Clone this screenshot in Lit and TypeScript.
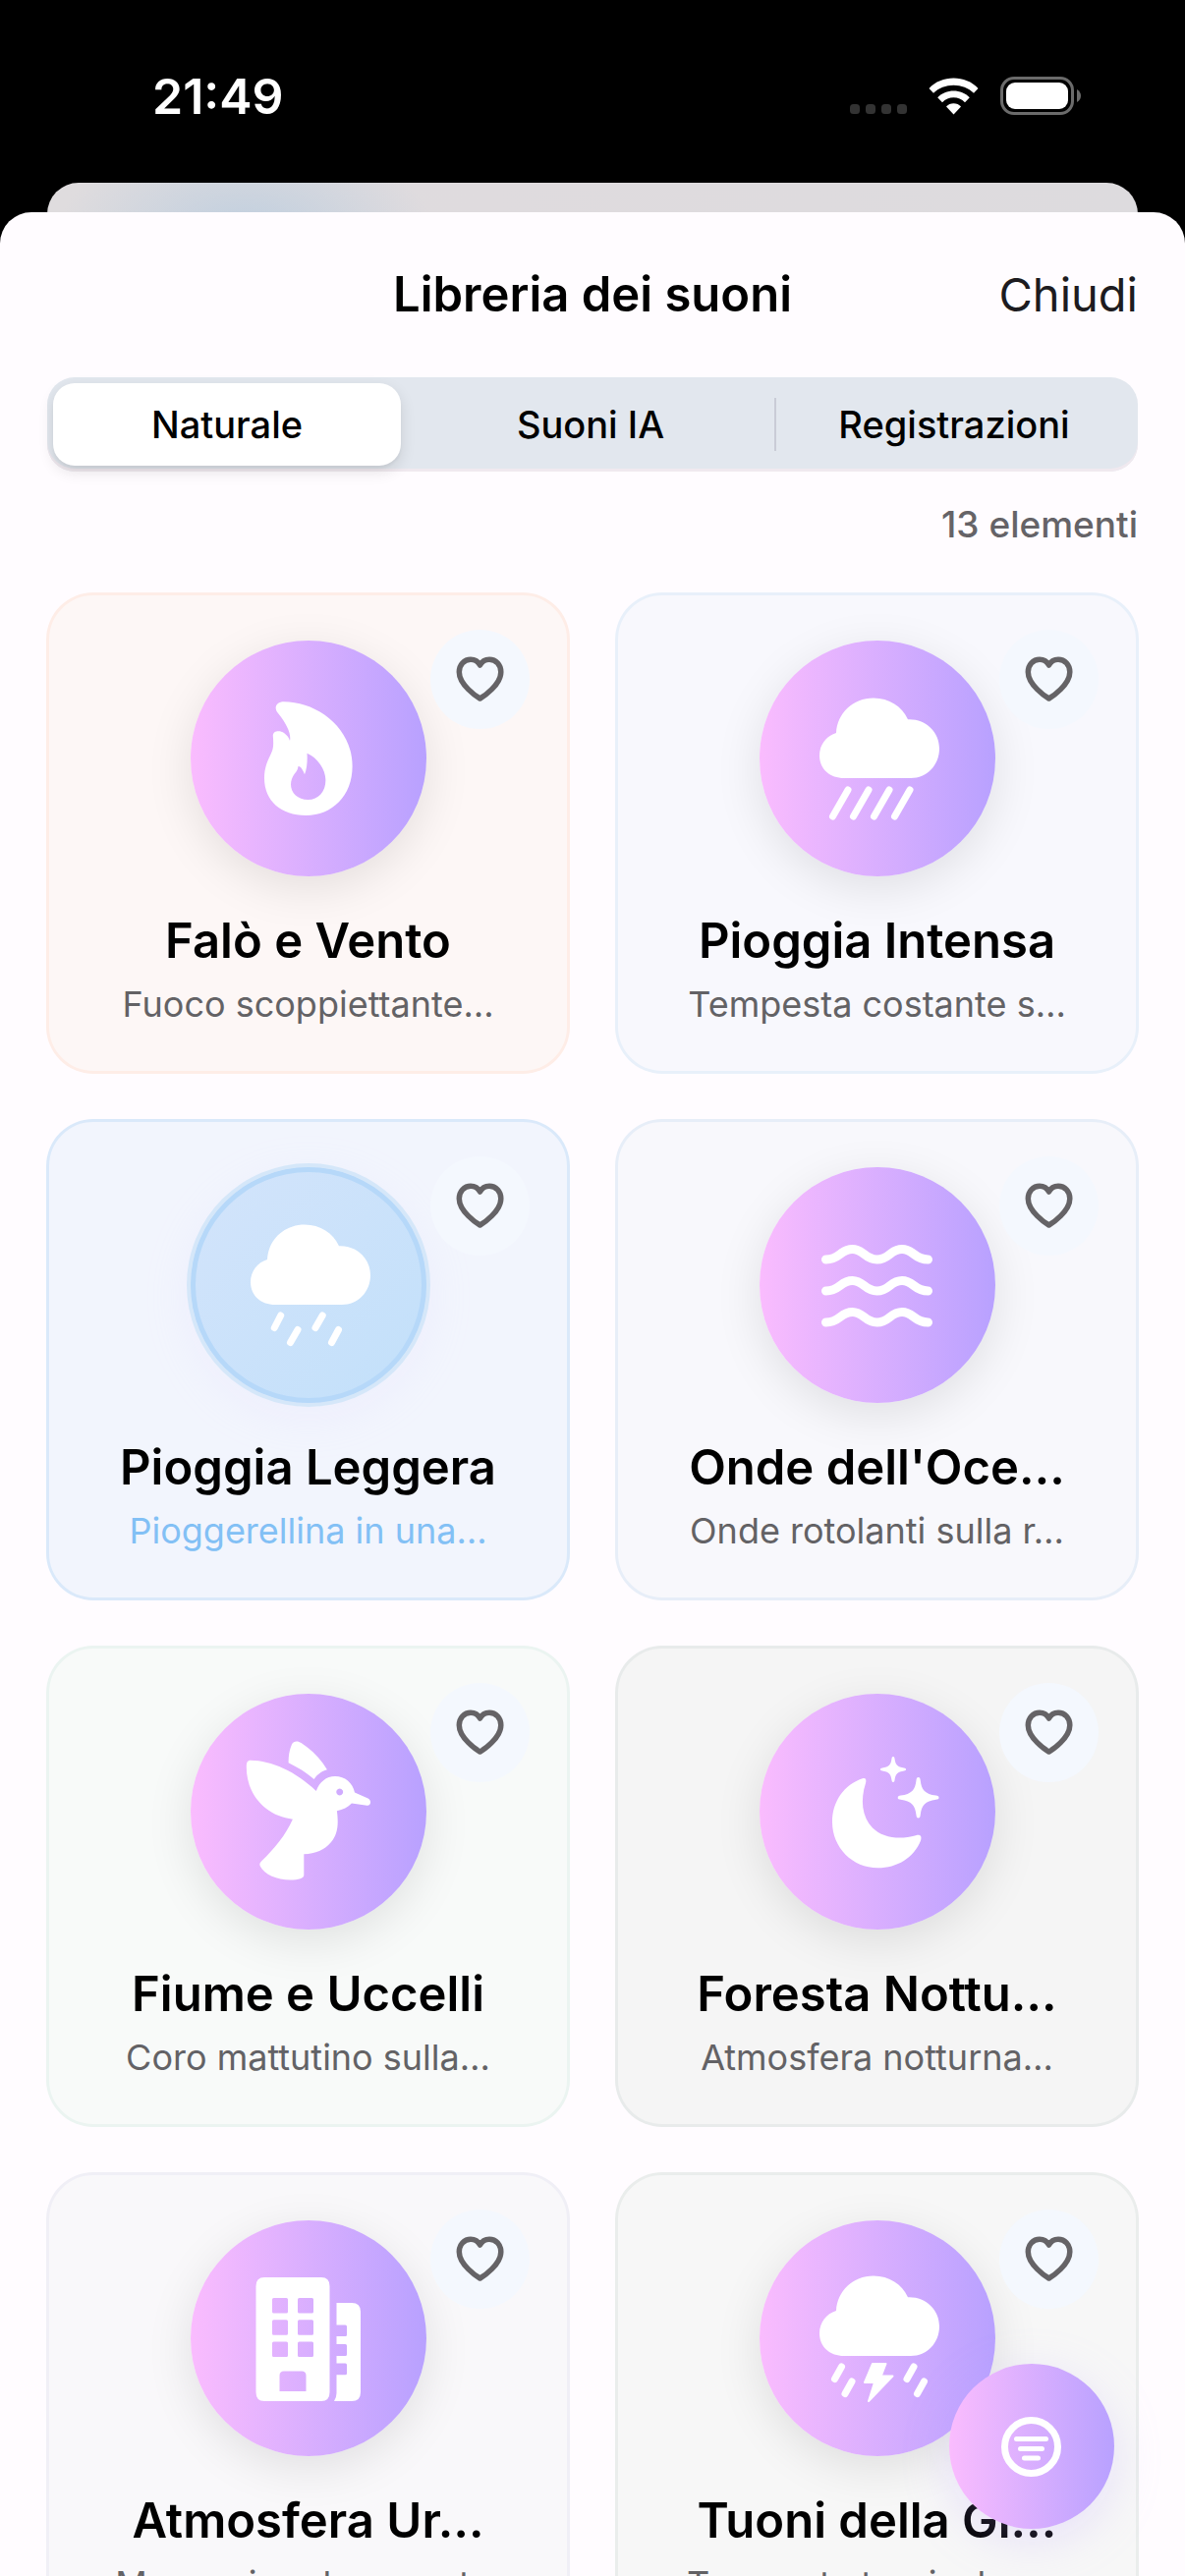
import { LitElement, css, html, svg, type TemplateResult, type SVGTemplateResult } from "lit";
import { customElement, property, state } from "lit/decorators.js";
import { classMap } from "lit/directives/class-map.js";

type IconName = "flame" | "heavyRain" | "lightRain" | "waves" | "bird" | "night" | "building" | "thunder";

interface Sound {
  title: string;
  text: string;
  icon: IconName;
  tone: string;
  playing?: boolean;
}

const SOUNDS: Sound[] = [
  { title: "Falò e Vento", text: "Fuoco scoppiettante…", icon: "flame", tone: "fire" },
  { title: "Pioggia Intensa", text: "Tempesta costante s…", icon: "heavyRain", tone: "rain" },
  { title: "Pioggia Leggera", text: "Pioggerellina in una…", icon: "lightRain", tone: "drizzle", playing: true },
  { title: "Onde dell'Oce…", text: "Onde rotolanti sulla r…", icon: "waves", tone: "ocean" },
  { title: "Fiume e Uccelli", text: "Coro mattutino sulla…", icon: "bird", tone: "river" },
  { title: "Foresta Nottu…", text: "Atmosfera notturna…", icon: "night", tone: "forest" },
  { title: "Atmosfera Ur…", text: "Mormorio urbano not…", icon: "building", tone: "city" },
  { title: "Tuoni della Gi…", text: "Tempesta tropicale c…", icon: "thunder", tone: "jungle" },
];

const TABS = ["Naturale", "Suoni IA", "Registrazioni"];

const cloud = svg`<path d="M86 140 C72 140 61 131 61 117 C61 106 68 97 78 94 C79 74 95 58.5 116 58.5 C132 58.5 145 67 151 80.3 C169 79.5 183 93 183 110 C183 127 170 140.5 153 140 Z"/>`;

const ICONS: Record<IconName, SVGTemplateResult> = {
  flame: svg`<path fill-rule="evenodd" d="M95 62.3 C128 62.3 164.6 88 164.6 128 C164.6 158 144 178 117.4 178 C92 178 75 163 75 140 C75 130 78 123 81 117 C84.5 110 84.5 106 83.8 97 C83.5 91.5 91 91 95 94 C98.5 96.5 100 99 101 102 C102.5 95 98 85 89 74 C84 68 87.5 62.3 95 62.3Z M118.5 114.7 C129 119 137.4 131 137.4 142 C137.4 154 130 162 119.5 162 C109 162 102 155 102 146.5 C102 142 103.5 139 105.5 136 C108.5 132.5 109 131 109.5 128 C112 127.5 114.5 132 116 136.3 C118.5 130 119 122 118.5 114.7Z"/>`,
  heavyRain: svg`${cloud}<path class="line" stroke-width="7" d="M90 152 L74.5 179 M111 152 L95.5 179 M132 152 L116.5 179 M153 152 L137.5 179"/>`,
  lightRain: svg`${cloud}<path class="line" stroke-width="7" d="M91.7 151 L85.3 163.5 M109 165.5 L101.5 178.5 M134.2 151 L127 163.5 M150.5 165.5 L143.5 178.5"/>`,
  waves: svg`<path class="line" stroke-width="9" d="M67.5 94 C82 94 82 83.5 94.5 83.5 C106 83.5 107 94 119.5 94 C132 94 133 83.5 145 83.5 C157 83.5 157 94 171.5 94 M67.5 126 C82 126 82 115.5 94.5 115.5 C106 115.5 107 126 119.5 126 C132 126 133 115.5 145 115.5 C157 115.5 157 126 171.5 126 M67.5 158 C82 158 82 147.5 94.5 147.5 C106 147.5 107 158 119.5 158 C132 158 133 147.5 145 147.5 C157 147.5 157 158 171.5 158"/>`,
  bird: svg`<path d="M99.6 70.2 C99.5 62 101 56 103 51.5 C104.5 48 109 47.5 112.5 50 C124 57.5 133 67 138.9 77.3 C133 79 129 82 125.6 87.1 C118 80 109 75 99.6 70.2Z"/>
    <path fill-rule="evenodd" d="M61 67.8 C82 68 107 79 127.8 99 C131 90 138 84 147 84 C157 84 165 90.5 167 100.6 L180.5 106.5 C184.5 108.5 183.5 114.3 179.5 113.8 L163.9 111.5 C160 115.5 155 118 148.9 119.2 C151 135 149 144 143 151 C136.5 159 127 163 115.3 163.2 L115.3 184.5 C115.3 188 110 189.5 101.4 189.5 C88 189.5 75 184 70.8 175.5 C69.8 173.3 70.5 172 72.5 170 C85 158 97 143.5 103.9 127.7 C78 125 56.5 104 56.8 74 C56.9 70 57.8 67.8 61 67.8Z M151.7 96.6 a3.4 3.4 0 1 0 .01 0Z"/>`,
  night: svg`<path d="M105.5 86 C108 85.5 109 87.5 108 91 C102.5 108 104 125 115 136.5 C125 146.5 142 149 159 144.3 C163.5 142.8 165.5 145 164 149.5 C157 167 140 177.3 120.5 177.3 C94.5 177.3 74 156.5 74 130.5 C74 110 85.5 92.5 105.5 86Z"/>
    <path d="M161.6 85 C163 85 163.5 86 163.7 88 C164.8 98 168.5 102 179.5 103.6 C181.5 103.9 182.5 104.3 182.5 105.7 C182.5 107.1 181.5 107.5 179.5 107.8 C168.5 109.4 164.8 113.4 163.7 123.4 C163.5 125.4 163 126.4 161.6 126.4 C160.2 126.4 159.7 125.4 159.5 123.4 C158.4 113.4 154.7 109.4 143.7 107.8 C141.7 107.5 140.7 107.1 140.7 105.7 C140.7 104.3 141.7 103.9 143.7 103.6 C154.7 102 158.4 98 159.5 88 C159.7 86 160.2 85 161.6 85Z"/>
    <path d="M136 64 C137 64 137.3 64.7 137.5 66 C138.2 72 140.5 74.6 147 75.5 C148.3 75.7 149 76 149 77 C149 78 148.3 78.3 147 78.5 C140.5 79.4 138.2 82 137.5 88 C137.3 89.3 137 90 136 90 C135 90 134.7 89.3 134.5 88 C133.8 82 131.5 79.4 125 78.5 C123.7 78.3 123 78 123 77 C123 76 123.7 75.7 125 75.5 C131.5 74.6 133.8 72 134.5 66 C134.7 64.7 135 64 136 64Z"/>`,
  building: svg`<path fill-rule="evenodd" d="M75 58 H133 Q141.5 58 141.5 67 V175 Q141.5 184 133 184 H75 Q66.5 184 66.5 175 V67 Q66.5 58 75 58Z
      M84.5 79 h13 q1.5 0 1.5 1.5 v12.5 q0 1.5 -1.5 1.5 h-13 q-1.5 0 -1.5 -1.5 v-12.5 q0 -1.5 1.5 -1.5Z
      M110.5 79 h13 q1.5 0 1.5 1.5 v12.5 q0 1.5 -1.5 1.5 h-13 q-1.5 0 -1.5 -1.5 v-12.5 q0 -1.5 1.5 -1.5Z
      M84.5 101.3 h13 q1.5 0 1.5 1.5 v12.5 q0 1.5 -1.5 1.5 h-13 q-1.5 0 -1.5 -1.5 v-12.5 q0 -1.5 1.5 -1.5Z
      M110.5 101.3 h13 q1.5 0 1.5 1.5 v12.5 q0 1.5 -1.5 1.5 h-13 q-1.5 0 -1.5 -1.5 v-12.5 q0 -1.5 1.5 -1.5Z
      M84.5 123.5 h13 q1.5 0 1.5 1.5 v12.5 q0 1.5 -1.5 1.5 h-13 q-1.5 0 -1.5 -1.5 v-12.5 q0 -1.5 1.5 -1.5Z
      M110.5 123.5 h13 q1.5 0 1.5 1.5 v12.5 q0 1.5 -1.5 1.5 h-13 q-1.5 0 -1.5 -1.5 v-12.5 q0 -1.5 1.5 -1.5Z
      M95 153.5 h18 q4.5 0 4.5 4.5 v16 h-27 v-16 q0 -4.5 4.5 -4.5Z"/>
    <path d="M148.5 84 H164 Q173 84 173 93 V175 Q173 184 164 184 H146 Q148.5 180 148.5 176 V157.3 H157.5 Q159 157.3 159 155.8 V147 Q159 145.5 157.5 145.5 H148.5 V138 H157.5 Q159 138 159 136.5 V127.5 Q159 126 157.5 126 H148.5 V118 H157.5 Q159 118 159 116.5 V108 Q159 106.5 157.5 106.5 H148.5Z"/>`,
  thunder: svg`<g transform="translate(0 -2)">${cloud}</g><path class="line" stroke-width="7" d="M83.5 149 L76.5 161.5 M94 164 L87 176.5 M157 149 L150 161.5 M167.5 164 L160.5 176.5"/>
    <path stroke="#fff" stroke-width="2" stroke-linejoin="round" d="M115 146 L128.5 146 L123.7 158.5 L135.5 158.5 L111 184 L117 165 L107 165Z"/>`,
};

@customElement("sound-card")
export class SoundCard extends LitElement {
  @property({ attribute: false }) sound!: Sound;
  @state() private liked = false;

  static styles = css`
    :host { display: block; min-width: 0; }
    .card {
      --fill: #f8f8fc;
      --edge: #e8eff9;
      position: relative;
      display: flex;
      flex-direction: column;
      align-items: center;
      box-sizing: border-box;
      padding: 46px;
      border: 2px solid var(--edge);
      border-radius: 47px;
      background: var(--fill);
      box-shadow: 0 0 0 1px var(--edge);
    }
    .fire { --fill: #fdf7f6; --edge: #feede7; }
    .rain { --fill: #f8f8fd; --edge: #e8f0fa; }
    .drizzle { --fill: #f2f5fd; --edge: #dae9fa; }
    .ocean { --fill: #f8f8fc; --edge: #e7eef8; }
    .river { --fill: #f8faf9; --edge: #ebf4f1; }
    .forest { --fill: #f5f5f5; --edge: #e8ebeb; }
    .city { --fill: #f9f8fa; --edge: #f0eff6; }
    .jungle { --fill: #f7f7f7; --edge: #eaedec; }
    .disc {
      width: 240px;
      height: 240px;
      padding: 0;
      border: 0;
      border-radius: 50%;
      background: linear-gradient(90deg, #fabcfe, #b8a1ff);
      box-shadow: 0 12px 48px rgba(0, 0, 0, 0.1);
    }
    .disc svg { display: block; width: 100%; height: 100%; fill: #fff; }
    .line { fill: none; stroke: #fff; stroke-linecap: round; stroke-linejoin: round; }
    .playing .disc {
      background: linear-gradient(135deg, #d3e4fb, #c2e0fa);
      box-shadow: 0 0 0 4px #d5e7f9, inset 0 0 0 5px #b6d8f9, 0 12px 48px rgba(220, 210, 255, 0.2);
    }
    .title {
      margin: 36px 0 0;
      font-size: 49px;
      line-height: 60px;
      font-weight: 600;
      color: #000;
      white-space: nowrap;
    }
    .text {
      margin: 12px 0 0;
      font-size: 36px;
      line-height: 44px;
      color: #636265;
      white-space: nowrap;
    }
    .playing .text { color: #82c0f5; }
    .like {
      position: absolute;
      top: 35px;
      right: 38px;
      width: 101px;
      height: 101px;
      padding: 0;
      border: 0;
      border-radius: 50%;
      background: #f4f8fe;
    }
    .like svg { display: block; width: 100%; height: 100%; fill: none; stroke: #656366; stroke-width: 5.5; stroke-linejoin: round; }
    .like.on svg { fill: #656366; }
  `;

  render(): TemplateResult {
    const s = this.sound;
    return html`
      <article class=${classMap({ card: true, [s.tone]: true, playing: !!s.playing })}>
        <button class="disc" aria-label=${s.title}><svg viewBox="0 0 240 240">${ICONS[s.icon]}</svg></button>
        <h2 class="title">${s.title}</h2>
        <p class="text">${s.text}</p>
        <button class=${classMap({ like: true, on: this.liked })} aria-label="Preferito" aria-pressed=${this.liked}
          @click=${() => (this.liked = !this.liked)}>
          <svg viewBox="0 0 101 101"><path d="M50.5 70 C47 68 29.3 56 29.3 43 C29.3 35.5 34.5 30.3 41 30.3 C45 30.3 48.5 32.3 50.5 36 C52.5 32.3 56 30.3 60 30.3 C66.7 30.3 71.8 35.5 71.8 43 C71.8 56 54 68 50.5 70Z"/></svg>
        </button>
      </article>
    `;
  }
}

@customElement("app-root")
export class AppRoot extends LitElement {
  @state() private tab = 0;

  static styles = css`
    :host {
      display: flex;
      flex-direction: column;
      height: 100vh;
      overflow: hidden;
      background: #000;
      font-family: Inter, "Liberation Sans", sans-serif;
    }
    button { font-family: inherit; cursor: pointer; }
    .status {
      display: flex;
      justify-content: space-between;
      align-items: center;
      box-sizing: border-box;
      height: 186px;
      padding: 9px 105px 0 155px;
      color: #fff;
    }
    .time { font-size: 50px; line-height: 60px; font-weight: 600; }
    .signals { display: block; width: 236px; height: 40px; }
    .behind {
      flex: none;
      height: 66px;
      margin: 0 48px;
      border-radius: 32px 32px 0 0;
      background:
        radial-gradient(ellipse 190px 100px at 202px 50px, #c0cfdf, #c0cfdf00),
        linear-gradient(90deg, #dfdcde, #dfdbde 40%, #dddbde);
    }
    .sheet {
      position: relative;
      flex: 1;
      min-height: 0;
      display: flex;
      flex-direction: column;
      margin-top: -36px;
      border-radius: 32px 32px 0 0;
      background: #fffcff;
      overflow: hidden;
    }
    .head {
      display: grid;
      grid-template-columns: 1fr auto 1fr;
      align-items: center;
      padding: 54px 48px;
    }
    .heading { grid-column: 2; margin: 0; font-size: 49px; line-height: 60px; font-weight: 600; color: #000; }
    .close {
      justify-self: end;
      padding: 0;
      border: 0;
      background: none;
      font-size: 47px;
      line-height: 60px;
      color: #1d1b20;
    }
    .tabs {
      display: grid;
      grid-template-columns: repeat(3, 1fr);
      margin: 0 48px;
      border-radius: 28px;
      background: #e2e7ee;
      box-shadow: inset 0 -3px 0 #f0e9ef;
    }
    .tab {
      display: flex;
      height: 96px;
      padding: 6px 10px 6px 6px;
      border: 0;
      background: none;
      font-size: 38px;
      font-weight: 500;
      color: #000;
    }
    .label { flex: 1; border-radius: 22px; line-height: 84px; }
    .on .label { background: #fff; box-shadow: 0 6px 16px rgba(0, 0, 0, 0.11), 0 3px 3px rgba(0, 0, 0, 0.04); }
    .divided {
      background: linear-gradient(#c9ccd6, #c9ccd6) 0 50% / 2px 54px no-repeat;
    }
    .count {
      margin: 30px 48px 0;
      font-size: 37px;
      line-height: 48px;
      font-weight: 500;
      color: #656367;
      text-align: right;
    }
    .list {
      flex: 1;
      min-height: 0;
      display: grid;
      grid-template-columns: repeat(2, minmax(0, 1fr));
      align-content: start;
      gap: 48px;
      padding: 46px 48px;
      overflow-y: auto;
      scrollbar-width: none;
    }
    .filter {
      position: absolute;
      right: 72px;
      bottom: 48px;
      width: 168px;
      height: 168px;
      padding: 0;
      border: 0;
      border-radius: 50%;
      background: linear-gradient(90deg, #fabcfe, #b8a1ff);
      box-shadow: 0 12px 48px rgba(184, 161, 255, 0.26);
    }
    .filter svg { display: block; width: 100%; height: 100%; fill: none; stroke: #fff; stroke-linecap: round; }
  `;

  render(): TemplateResult {
    return html`
      <div class="status">
        <span class="time">21:49</span>
        <svg class="signals" viewBox="0 0 236 40" aria-hidden="true">
          <g fill="#333">
            <rect x="0" y="28" width="10" height="10" rx="3.5" /><rect x="16" y="28" width="10" height="10" rx="3.5" />
            <rect x="32" y="28" width="10" height="10" rx="3.5" /><rect x="48" y="28" width="10" height="10" rx="3.5" />
          </g>
          <g fill="#fff">
            <path d="M80.5 12 C93 -2 118 -2 130.500 12 L126 16.800 C115.500 6 95.500 6 85 16.800Z" />
            <path d="M89.200 21.300 C97.500 12.300 113.500 12.300 121.800 21.300 L117 26.200 C111 19.500 100 19.500 94 26.200Z" />
            <path d="M98 30.500 C101.500 26 109.500 26 113 30.500 L105.500 38.500Z" />
            <rect x="159" y="6" width="63" height="27" rx="9" />
          </g>
          <rect x="154.500" y="1.500" width="72" height="36" rx="12.500" fill="none" stroke="#6b6b6b" stroke-width="3" />
          <path d="M231 13 Q235 15.500 235 19.500 Q235 23.500 231 26Z" fill="#6b6b6b" />
        </svg>
      </div>
      <div class="behind"></div>
      <main class="sheet">
        <header class="head">
          <h1 class="heading">Libreria dei suoni</h1>
          <button class="close">Chiudi</button>
        </header>
        <div class="tabs" role="tablist">
          ${TABS.map(
            (name, i) => html`<button
              role="tab"
              aria-selected=${this.tab === i}
              class=${classMap({ tab: true, on: this.tab === i, divided: i > 0 && this.tab !== i && this.tab !== i - 1 })}
              @click=${() => (this.tab = i)}
            ><span class="label">${name}</span></button>`
          )}
        </div>
        <p class="count">13 elementi</p>
        <section class="list">${SOUNDS.map((s) => html`<sound-card .sound=${s}></sound-card>`)}</section>
        <button class="filter" aria-label="Filtra">
          <svg viewBox="0 0 168 168">
            <circle cx="83.5" cy="84.5" r="27" stroke-width="7" />
            <path stroke-width="5" d="M68.5 76.500 H98.500 M72.500 86.500 H94.500 M76.500 96 H90.500" />
          </svg>
        </button>
      </main>
    `;
  }
}
